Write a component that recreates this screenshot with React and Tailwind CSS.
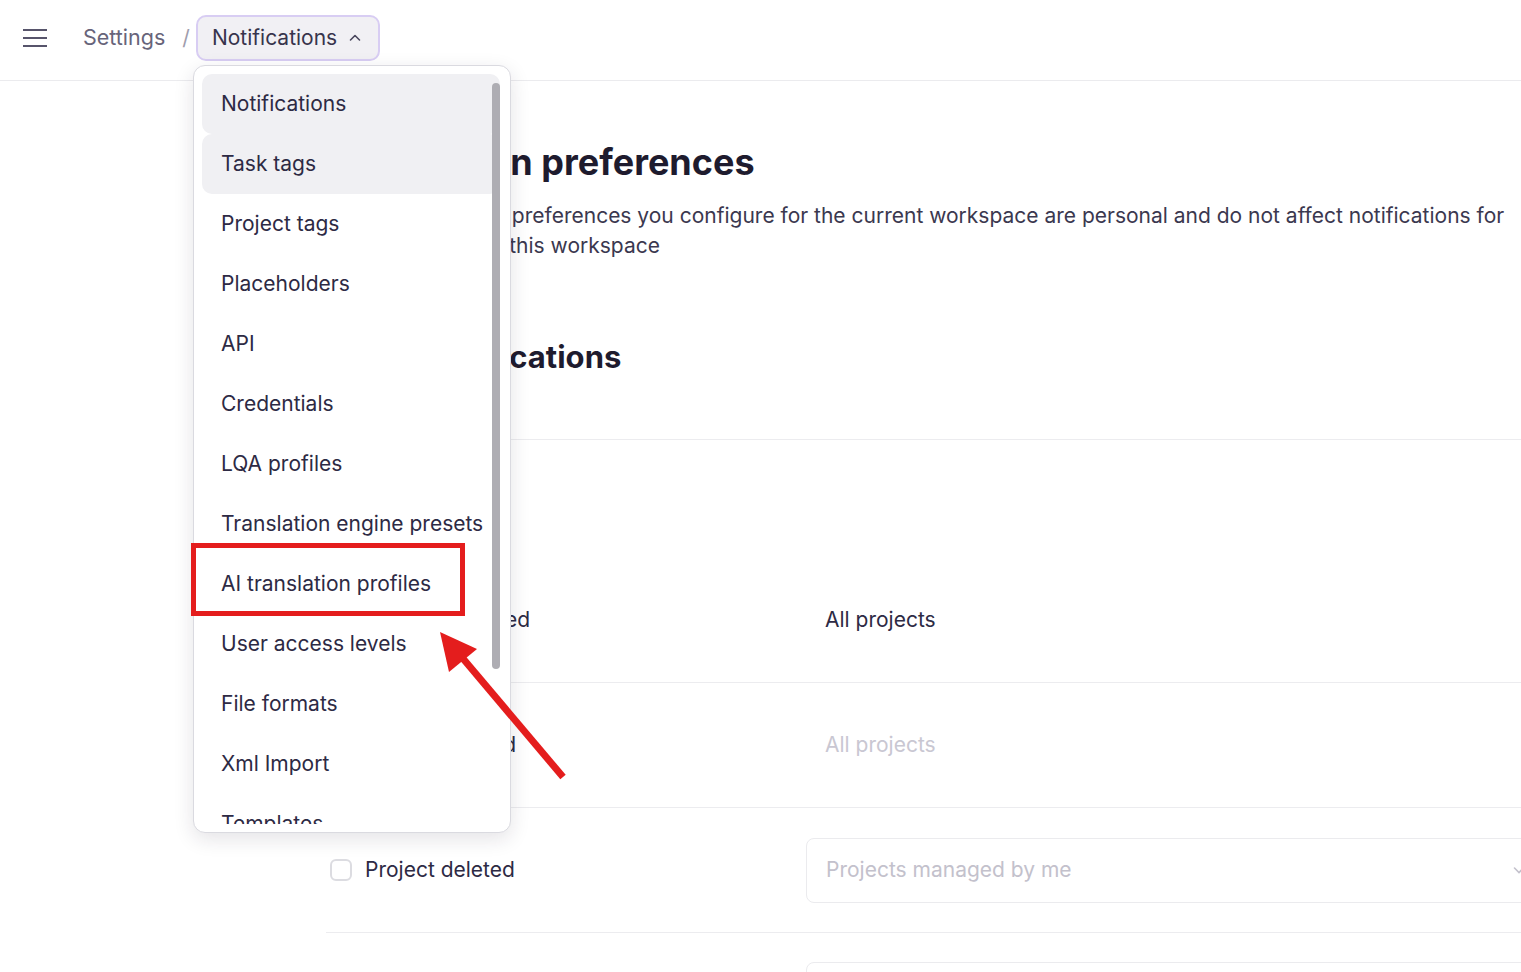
import React from 'react'

const menuItems = [
  'Notifications',
  'Task tags',
  'Project tags',
  'Placeholders',
  'API',
  'Credentials',
  'LQA profiles',
  'Translation engine presets',
  'AI translation profiles',
  'User access levels',
  'File formats',
  'Xml Import',
  'Templates',
]

const Checkbox = ({ checked }) => (
  <span
    className={`w-[22px] h-[22px] rounded-[6px] border-2 shrink-0 ${
      checked ? 'bg-[#6d4fd8] border-[#6d4fd8]' : 'border-[#dcdce1] bg-white'
    }`}
  />
)

const Row = ({ label, checked, children }) => (
  <div className="grid grid-cols-[480px_1fr] items-center h-[125px] border-b border-[#ececef]">
    <div className="flex items-center gap-[13px] pl-1">
      <Checkbox checked={checked} />
      <span className="text-[21px] text-[#2d2a44]">{label}</span>
    </div>
    {children}
  </div>
)

const App = () => {
  return (
    <div
      className="relative w-full h-[972px] overflow-hidden bg-white"
      style={{ fontFamily: 'Inter, "Noto Sans", sans-serif' }}
    >
      {/* top bar */}
      <header className="h-[81px] pb-[5px] border-b border-[#ebebee] flex items-center pl-[23px]">
        <svg width="24" height="18" viewBox="0 0 24 18" className="mr-[36px]">
          <path d="M0 1h24M0 9h24M0 17h24" stroke="#57546b" strokeWidth="2" />
        </svg>
        <span className="text-[21.5px] text-[#67647a]">Settings</span>
        <span className="text-[21px] text-[#a09dad] ml-[17px] mr-[6px]">/</span>
        <button className="h-[46px] pl-[14px] pr-[16px] flex items-center gap-[11px] rounded-[10px] border-2 border-[#d8cdf3] bg-[#f1f0f4]">
          <span className="text-[21px] text-[#37344c]">Notifications</span>
          <svg width="14" height="14" viewBox="0 0 14 14">
            <path d="M2.5 9l4.5-4.5 4.5 4.5" fill="none" stroke="#4a475e" strokeWidth="1.6" strokeLinecap="round" strokeLinejoin="round" />
          </svg>
        </button>
      </header>

      {/* page content */}
      <main className="ml-[326px] w-[1220px]">
        <h1 className="mt-[59px] text-[36px] leading-[44px] font-bold text-[#1e1b2e]">Notification preferences</h1>
        <p className="mt-[17px] text-[21px] leading-[30px] text-[#3b384f]">
          Global notification preferences you configure for the current workspace are personal and do not affect notifications for
          <br />
          other members of this workspace
        </p>
        <h2 className="mt-[77px] text-[31px] leading-[38px] font-bold text-[#1e1b2e]">Global notifications</h2>

        <div className="mt-[63px] border-t border-[#ececef]">
          <div className="h-[118px] flex items-center pl-1">
            <span className="text-[21px] font-semibold text-[#2d2a44]">Projects</span>
          </div>
          <Row label="Project assigned" checked>
            <span className="pl-[19px] text-[21px] text-[#2d2a44]">All projects</span>
          </Row>
          <Row label="Project created">
            <span className="pl-[19px] text-[21px] text-[#c9c7d2]">All projects</span>
          </Row>
          <Row label="Project deleted">
            <div className="h-[65px] rounded-lg border border-[#ebebee] flex items-center justify-between px-[19px]">
              <span className="text-[21px] text-[#c3c1cc]">Projects managed by me</span>
              <svg width="14" height="14" viewBox="0 0 14 14">
                <path d="M2.5 5l4.5 4.5 4.5-4.5" fill="none" stroke="#c3c1cc" strokeWidth="1.6" strokeLinecap="round" />
              </svg>
            </div>
          </Row>
          <div className="grid grid-cols-[480px_1fr] pt-[29px]">
            <div />
            <div className="h-[65px] rounded-lg border border-[#ebebee]" />
          </div>
        </div>
      </main>

      {/* dropdown menu */}
      <div className="absolute left-[193px] top-[65px] w-[318px] h-[768px] bg-white border border-[#dadae0] rounded-[12px] shadow-[0_6px_20px_rgba(30,27,46,0.12)] p-[8px] pr-[10px]">
        <div className="h-full overflow-hidden">
          <ul className="flex flex-col">
            {menuItems.map((item, i) => (
              <li
                key={item}
                className={`h-[60px] shrink-0 flex items-center pl-[19px] rounded-[10px] text-[21px] text-[#2d2a44] whitespace-nowrap ${
                  i < 2 ? 'bg-[#f0f0f3]' : ''
                }`}
              >
                {item}
              </li>
            ))}
          </ul>
        </div>
        <div className="absolute right-[10px] top-[17px] w-[8px] h-[586px] rounded-full bg-[#aeadb3]" />
      </div>

      {/* annotation */}
      <div className="absolute left-[191px] top-[543px] w-[274px] h-[73px] border-[5px] border-[#e41d1d]" />
      <svg className="absolute left-0 top-0 pointer-events-none" width="1521" height="972">
        <line x1="563" y1="777" x2="460" y2="655" stroke="#e41d1d" strokeWidth="7" />
        <polygon points="440,632 449,672 477,649" fill="#e41d1d" />
      </svg>
    </div>
  )
}

export default App
